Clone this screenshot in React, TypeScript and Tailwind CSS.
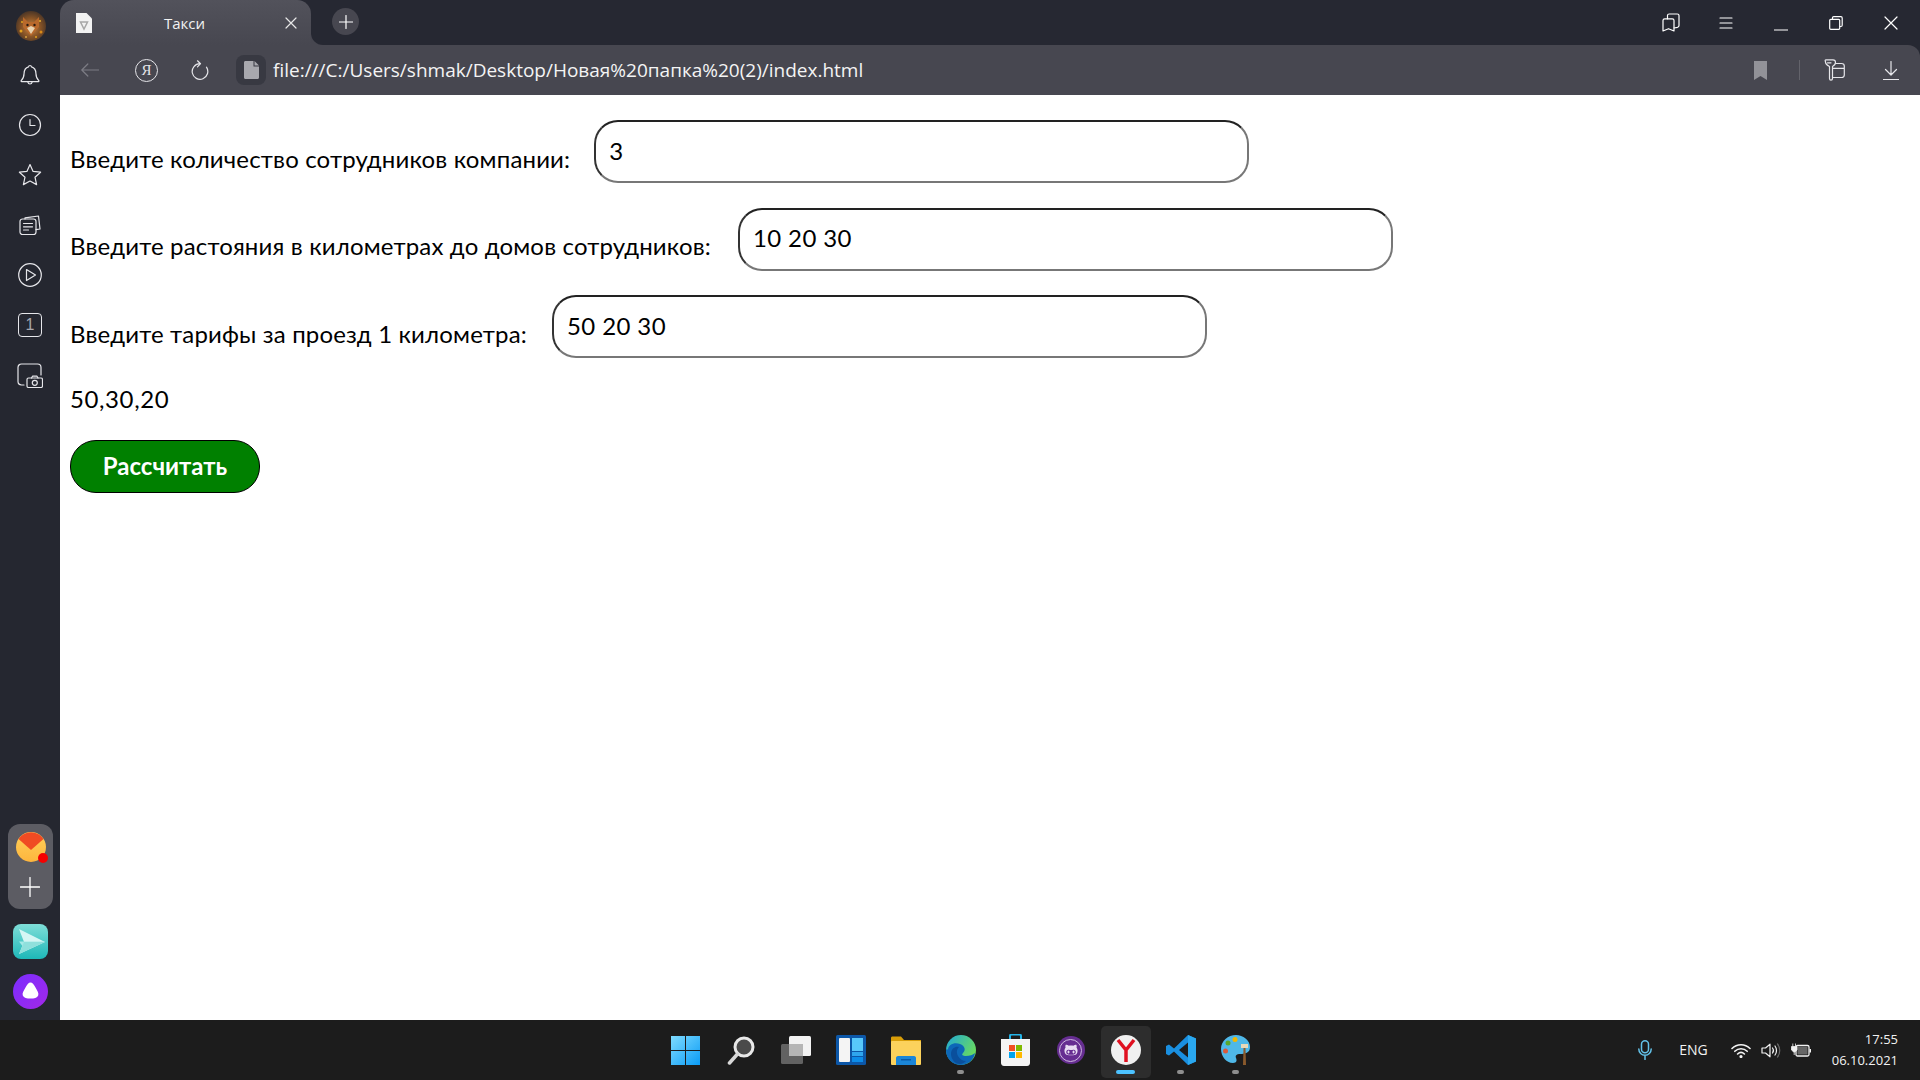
import React from "react";
import { FaGithubAlt } from "react-icons/fa";

const S = { fill: "none", stroke: "currentColor", strokeWidth: 1.2, strokeLinecap: "round" as const, strokeLinejoin: "round" as const };

function Ico({ w = 24, h = 24, children, className = "" }: { w?: number; h?: number; children: React.ReactNode; className?: string }) {
  return (
    <svg width={w} height={h} viewBox={`0 0 ${w} ${h}`} className={className} {...S}>
      {children}
    </svg>
  );
}

function SideItem({ children }: { children: React.ReactNode }) {
  return <div className="h-[50px] flex items-center justify-center text-[#e6e6ea]">{children}</div>;
}

function Sidebar() {
  return (
    <aside className="w-[60px] shrink-0 bg-[#252730] flex flex-col">
      <div className="h-[50px] flex items-start justify-center pt-[11px] pl-[2px]">
        <svg width="30" height="30" viewBox="0 0 30 30">
          <defs>
            <radialGradient id="fox" cx="50%" cy="55%" r="55%">
              <stop offset="0" stopColor="#c98a4a" />
              <stop offset="0.55" stopColor="#8a5526" />
              <stop offset="1" stopColor="#4a3526" />
            </radialGradient>
          </defs>
          <circle cx="15" cy="15" r="15" fill="url(#fox)" />
          <path d="M7 6l5 5h6l5-5 0 10-8 9-8-9z" fill="#b8692c" />
          <path d="M11 17l4 6 4-6-4-2z" fill="#e8d2b0" />
          <circle cx="11.500" cy="14" r="1.200" fill="#2a1a10" />
          <circle cx="18.500" cy="14" r="1.200" fill="#2a1a10" />
          <circle cx="5" cy="20" r="1.500" fill="#e2a11e" />
          <circle cx="25" cy="21" r="1.500" fill="#d98a18" />
          <circle cx="6" cy="11" r="1" fill="#e2a11e" />
          <circle cx="24" cy="10" r="1" fill="#e8b030" />
          <circle cx="10" cy="26" r="1" fill="#d9a040" />
          <circle cx="20" cy="26" r="1" fill="#e2a11e" />
        </svg>
      </div>
      <SideItem>
        <Ico>
          <path d="M12 2.500c.9 0 1.400.6 1.500 1.300 3 .8 4.300 3.400 4.400 6.400.1 3.800 1.100 5.700 2.900 7.500.3.400.1.900-.4.900H3.600c-.5 0-.7-.5-.4-.9 1.800-1.800 2.800-3.700 2.900-7.500.1-3 1.400-5.600 4.400-6.400.1-.7.600-1.300 1.500-1.300z" />
          <path d="M9.800 18.800c.3 1.500 1.100 2.200 2.200 2.200s1.900-.7 2.200-2.200" />
        </Ico>
      </SideItem>
      <SideItem>
        <Ico>
          <circle cx="12" cy="12" r="10.500" />
          <path d="M12 6.500V12.500H17" />
        </Ico>
      </SideItem>
      <SideItem>
        <Ico>
          <path d="M12 1.500l3.100 6.900 7.500.8-5.600 5 1.600 7.400L12 18l-6.600 3.600 1.600-7.400-5.600-5 7.500-.8z" />
        </Ico>
      </SideItem>
      <SideItem>
        <Ico>
          <rect x="2" y="6" width="16" height="15.500" rx="2.500" />
          <path d="M5.500 10.500h9M5.500 13.800h9M5.500 17h5" />
          <path d="M7 6V4.800l13.500-1.800 1.500 13-4 .6" />
        </Ico>
      </SideItem>
      <SideItem>
        <Ico>
          <circle cx="12" cy="12" r="11.300" />
          <path d="M8.500 6.500l9 5.500-9 5.500z" />
        </Ico>
      </SideItem>
      <SideItem>
        <div className="w-[24px] h-[24px] border-[1.3px] border-[#e6e6ea] rounded-[4px] flex items-center justify-center text-[16px] leading-none font-['Liberation_Sans',sans-serif] text-[#a8a8ae]">1</div>
      </SideItem>
      <SideItem>
        <Ico w={26} h={25}>
          <path d="M7 22H4.500C2.500 22 1 20.500 1 18.500V4.500C1 2.500 2.500 1 4.500 1H20.500C22.500 1 24 2.500 24 4.500V12" />
          <rect x="10" y="15" width="15.500" height="9.500" rx="1.500" />
          <circle cx="17.800" cy="19.800" r="2.500" />
          <path d="M14.500 15l1-1.800h4.500l1 1.800" />
        </Ico>
      </SideItem>

      <div className="mt-auto flex flex-col items-center pb-[11px]">
        <div className="w-[45px] h-[85px] bg-[#5c5c63] rounded-[12px] flex flex-col items-center">
          <svg width="32" height="32" viewBox="0 0 32 32" className="mt-[8px] ml-[3px] overflow-visible">
            <defs>
              <linearGradient id="mailB" x1="0" y1="0" x2="0" y2="1">
                <stop offset="0" stopColor="#ffd15a" />
                <stop offset="1" stopColor="#fdb53d" />
              </linearGradient>
            </defs>
            <circle cx="15" cy="15" r="15" fill="url(#mailB)" />
            <path d="M2.500 7A15 15 0 0 1 27.500 7L15 18z" fill="#f04b23" />
            <circle cx="27" cy="26" r="5" fill="#f40000" />
          </svg>
          <svg width="20" height="20" viewBox="0 0 20 20" className="mt-[13px] text-white" {...S} strokeWidth={1.3}>
            <path d="M10 .5V19.500M.5 10H19.500" />
          </svg>
        </div>
        <svg width="35" height="35" viewBox="0 0 35 35" className="mt-[15px]">
          <defs>
            <linearGradient id="tg" x1="0" y1="0" x2="0" y2="1">
              <stop offset="0" stopColor="#7fded8" />
              <stop offset="1" stopColor="#1eb8b8" />
            </linearGradient>
          </defs>
          <rect width="35" height="35" rx="8" fill="url(#tg)" />
          <path d="M6 5L32 18 6 30 11 18z" fill="#d6f6f4" />
          <path d="M6 17.500H32L11 24z" fill="#a5e9e6" />
          <path d="M11 18L6 30 32 18z" fill="#8fe0dc" />
        </svg>
        <svg width="35" height="35" viewBox="0 0 35 35" className="mt-[15px]">
          <defs>
            <linearGradient id="al" x1="0" y1="0" x2="1" y2="1">
              <stop offset="0" stopColor="#7a2dff" />
              <stop offset="1" stopColor="#a328e8" />
            </linearGradient>
          </defs>
          <circle cx="17.500" cy="17.500" r="17.500" fill="url(#al)" />
          <path d="M17.500 8.500c2 0 3 1.500 5 5 2 3.500 3.500 5.500 2.700 8-1 2.500-4 3-7.700 3s-6.700-.5-7.700-3c-.8-2.500.7-4.500 2.700-8s3-5 5-5z" fill="#fff" />
        </svg>
      </div>
    </aside>
  );
}

function WinSlot({ children }: { children: React.ReactNode }) {
  return <div className="w-[55px] h-[20px] flex items-center justify-center">{children}</div>;
}

function TabStrip() {
  return (
    <div className="h-[45px] shrink-0 bg-[#262832] flex items-stretch text-white">
      <div className="w-[251px] rounded-t-[14px] bg-gradient-to-b from-[#52525b] to-[#474750] flex items-center pl-[16px] pr-[14px]">
        <svg width="16" height="20" viewBox="0 0 16 20" className="shrink-0 mt-[1px]">
          <path d="M0 0H10.500L16 5.500V20H0z" fill="#f2f2f2" />
          <path d="M4.500 9L11.500 9 8 16z" fill="none" stroke="#a8a8a8" strokeWidth="1.500" />
        </svg>
        <span className="ml-[72px] mt-[1px] text-[15px] leading-none font-['Open_Sans',sans-serif] text-[#f2f2f2]">Такси</span>
        <svg width="12" height="12" viewBox="0 0 12 12" className="ml-auto text-[#e8e8e8]" {...S}>
          <path d="M1 1L11 11M11 1L1 11" />
        </svg>
      </div>
      <div className="flex-1 bg-[#474750]">
        <div className="h-full bg-[#262832] rounded-bl-[12px] flex items-start">
          <div className="ml-[21px] pt-[8px]">
            <div className="w-[27px] h-[27px] rounded-full bg-[#474750] flex items-center justify-center">
              <svg width="14" height="14" viewBox="0 0 14 14" {...S}>
                <path d="M7 .5V13.500M.5 7H13.500" />
              </svg>
            </div>
          </div>
          <div className="ml-auto flex items-center pt-[13px] pr-[1.500px] text-white">
            <WinSlot>
              <svg width="18" height="20" viewBox="0 0 18 20" {...S}>
                <path d="M1 18V7.500c0-1 .6-1.700 1.700-1.700h7.600c1.100 0 1.700.7 1.700 1.700V18l-5.500-2.300z" />
                <path d="M5.500 5.800V2.500C5.500 1.500 6.100 1 7.200 1h8.100C16.400 1 17 1.500 17 2.500v10c0 .8-.5 1.500-1.500 1.800l-3.500.7" />
              </svg>
            </WinSlot>
            <WinSlot>
              <svg width="14" height="12" viewBox="0 0 14 12" {...S}>
                <path d="M1 1H13M1 6H13M1 11H13" />
              </svg>
            </WinSlot>
            <WinSlot>
              <svg width="14" height="14" viewBox="0 0 14 14" {...S} className="mt-[10px]">
                <path d="M.5 9H13.500" />
              </svg>
            </WinSlot>
            <WinSlot>
              <svg width="14" height="14" viewBox="0 0 14 14" {...S}>
                <rect x=".7" y="3.300" width="10" height="10" rx="1" />
                <path d="M3.500 3V1.800C3.500 1 4 .7 4.700.7h7.200c.8 0 1.300.5 1.300 1.300v7.300c0 .7-.4 1.200-1.200 1.200H11" />
              </svg>
            </WinSlot>
            <WinSlot>
              <svg width="14" height="14" viewBox="0 0 14 14" {...S}>
                <path d="M1 1L13 13M13 1L1 13" />
              </svg>
            </WinSlot>
          </div>
        </div>
      </div>
    </div>
  );
}

function Toolbar() {
  return (
    <div className="h-[50px] shrink-0 bg-[#474750] rounded-tr-[12px] flex items-center text-white">
      <svg width="18" height="14" viewBox="0 0 18 14" className="ml-[21px] text-[#7c7c84]" {...S}>
        <path d="M17.500 7H.8M6.800 1L.8 7l6 6" />
      </svg>
      <div className="ml-[36px] w-[23px] h-[23px] rounded-full border-[1.3px] border-[#e6e6ea] flex items-center justify-center text-[15px] leading-none font-['Liberation_Serif',serif] text-[#e6e6ea]">Я</div>
      <svg width="18" height="20" viewBox="0 0 18 20" className="ml-[33px] text-[#e6e6ea]" {...S}>
        <path d="M9 3.700A7.800 7.800 0 1 0 15.500 7.200" />
        <path d="M6.500 .8L9.500 3.700 6.500 6.800" />
      </svg>
      <div className="ml-[27px] w-[30px] h-[30px] rounded-[8px] bg-[#383942] flex items-center justify-center">
        <svg width="15" height="18" viewBox="0 0 15 18">
          <path d="M1.500 0H9.500V5.500H15V16.500c0 .9-.6 1.500-1.500 1.500H1.500C.6 18 0 17.400 0 16.500V1.500C0 .6.600 0 1.500 0zM10.500 0L15 4.500H10.500z" fill="#a8a8ae" />
        </svg>
      </div>
      <span className="ml-[7px] mt-[1px] text-[19px] leading-none font-['Open_Sans',sans-serif] text-[#f4f4f4] whitespace-nowrap">
        file:///C:/Users/shmak/Desktop/Новая%20папка%20(2)/index.html
      </span>
      <div className="ml-auto flex items-center pr-[21px]">
        <svg width="13" height="19" viewBox="0 0 13 19" className="mr-[32px]">
          <path d="M0 0H13V19L6.500 15 0 19z" fill="#929298" />
        </svg>
        <div className="w-[1.500px] h-[20px] bg-[#63636b] mr-[23px]" />
        <svg width="22" height="22" viewBox="0 0 22 22" className="mr-[38px] text-[#e6e6ea]" {...S}>
          <path d="M3 .8h7c1.500 0 2.500 1 2.500 2.500s-.5 3-3 4.200v12c0 1-.5 1.700-1.500 1.700s-1.500-.7-1.500-1.700v-12c-2.500-1.200-4-2.700-4-4.200S1.500.8 3 .8z" />
          <path d="M4.500 3.800H8M12.500 4.500h6c1.500 0 2.800 1.200 2.800 2.500v9c0 1.500-1.300 2.500-2.800 2.500H10M9.500 9.300h11.800" />
        </svg>
        <svg width="16" height="19" viewBox="0 0 16 19" className="text-[#e6e6ea]" {...S}>
          <path d="M8 .5V14M2.500 8.500L8 14l5.500-5.500M.5 18.500H15.500" />
        </svg>
      </div>
    </div>
  );
}

function Field({ label, value, gap }: { label: string; value: string; gap: string }) {
  return (
    <div className="flex items-center h-[63px] mb-[24.500px]">
      <label className={`pt-[14px] ${gap} text-[24px] leading-[32px] tracking-[0.16px] text-black whitespace-nowrap`}>{label}</label>
      <input
        readOnly
        value={value}
        className="w-[655px] h-[63px] rounded-[24px] border-2 border-t-[#222] border-l-[#333] border-r-[#777] border-b-[#777] pl-[13px] pr-[13px] pb-[3px] text-[24px] tracking-[0.4px] text-black outline-none bg-white font-['Lato','Noto_Sans',sans-serif]"
      />
    </div>
  );
}

function Page() {
  return (
    <main className="flex-1 bg-white pt-[25px] pl-[10px] font-['Lato','Noto_Sans',sans-serif]">
      <Field label="Введите количество сотрудников компании:" value="3" gap="mr-[24px]" />
      <Field label="Введите растояния в километрах до домов сотрудников:" value="10 20 30" gap="mr-[27px]" />
      <Field label="Введите тарифы за проезд 1 километра:" value="50 20 30" gap="mr-[25px]" />
      <p className="text-[24px] leading-[32px] tracking-[0.6px] text-black">50,30,20</p>
      <button className="block mt-[25px] w-[190px] h-[53px] rounded-[26px] bg-[#008000] border border-black text-white text-[24px] font-bold">Рассчитать</button>
    </main>
  );
}

function TaskIcon({ children, active, dot }: { children: React.ReactNode; active?: boolean; dot?: boolean }) {
  return (
    <div className="relative w-[55px] h-[52px] flex items-center justify-center">
      {active && <div className="absolute left-[2.500px] top-0 w-[50px] h-[52px] rounded-[5px] bg-[#2d2d2d]" />}
      <div className="relative mb-[4px]">{children}</div>
      {dot && <div className="absolute bottom-[4px] left-[24px] w-[7px] h-[4px] rounded-full bg-[#8e8e8e]" />}
      {active && <div className="absolute bottom-[4px] left-[18px] w-[19px] h-[4px] rounded-full bg-[#4cc2ff]" />}
    </div>
  );
}

function Taskbar() {
  return (
    <footer className="h-[60px] shrink-0 bg-[#1c1c1c] grid grid-cols-[1fr_auto_1fr] items-center">
      <div />
      <div className="flex items-center h-[52px] mt-[4px] ml-[1px]">
        <TaskIcon>
          <svg width="29" height="29" viewBox="0 0 29 29">
            <defs>
              <linearGradient id="win" x1="0" y1="0" x2="1" y2="1">
                <stop offset="0" stopColor="#7fdcff" />
                <stop offset="1" stopColor="#0a9bf5" />
              </linearGradient>
            </defs>
            <path d="M0 0H14V14H0zM15 0H29V14H15zM0 15H14V29H0zM15 15H29V29H15z" fill="url(#win)" />
          </svg>
        </TaskIcon>
        <TaskIcon>
          <svg width="28" height="29" viewBox="0 0 28 29">
            <circle cx="17" cy="11" r="9" fill="#4a4a4a" stroke="#e8e8e8" strokeWidth="3" />
            <path d="M10.500 18L2.500 27" stroke="#d8d8d8" strokeWidth="3.500" strokeLinecap="round" />
          </svg>
        </TaskIcon>
        <TaskIcon>
          <svg width="30" height="28" viewBox="0 0 30 28">
            <rect x="8" y="0" width="22" height="20" rx="1.500" fill="#f2f2f2" />
            <rect x="0" y="8" width="22" height="20" rx="1.500" fill="#6a6a6a" fillOpacity="0.9" />
            <rect x="8" y="8" width="14" height="12" fill="#b5b5b5" />
          </svg>
        </TaskIcon>
        <TaskIcon>
          <svg width="30" height="30" viewBox="0 0 30 30">
            <rect width="30" height="30" rx="1.500" fill="#0c57a8" />
            <rect x="3" y="3" width="11" height="24" rx="1" fill="#f4f4f4" />
            <rect x="16" y="3" width="11" height="13" fill="#58c8fa" />
            <rect x="16" y="17" width="11" height="4" fill="#2fa6ee" />
            <rect x="16" y="22" width="11" height="5" fill="#0c8ce8" />
          </svg>
        </TaskIcon>
        <TaskIcon>
          <svg width="30" height="29" viewBox="0 0 30 29">
            <path d="M0 2C0 1 .6.500 1.500.500H10L13 4H30V10H0z" fill="#d99e08" />
            <rect y="5" width="30" height="24" rx="1" fill="#fcd25c" />
            <path d="M5 22c0-1 .6-2 2-2h16c1.400 0 2 1 2 2v7H5z" fill="#1b86d8" />
            <rect x="10" y="23" width="10" height="1.500" fill="#0a5aa8" />
          </svg>
        </TaskIcon>
        <TaskIcon dot>
          <svg width="30" height="30" viewBox="0 0 30 30">
            <defs>
              <linearGradient id="edge1" x1="0" y1="0" x2="1" y2="0.600">
                <stop offset="0" stopColor="#1fa8d8" />
                <stop offset="1" stopColor="#6cdc5a" />
              </linearGradient>
            </defs>
            <circle cx="15" cy="15" r="15" fill="url(#edge1)" />
            <path d="M2 15C2 9 9 7 14 9c5 2 6 6 3 9-2 2 0 3 3 3 3.500 0 7-1 9-3-1 7-7 12-14 12C7 30 0 24 0 15c0-1 2-1 2 0z" fill="#0d67b8" />
            <path d="M5 19c0-6 5-8 8-7-2 2-3 5-1 9 1.500 3 5 5 8 5-2 2-4 3-6 3-5 0-9-5-9-10z" fill="#0a4f9c" />
          </svg>
        </TaskIcon>
        <TaskIcon>
          <svg width="29" height="32" viewBox="0 0 29 32">
            <path d="M9 5V2c0-1 .6-1.500 1.500-1.500h8c.9 0 1.500.5 1.500 1.500v3" fill="none" stroke="#24b4e8" strokeWidth="2" />
            <path d="M0 5H29V29c0 1.500-1 3-3 3H3c-2 0-3-1.500-3-3z" fill="#f4f4f4" />
            <rect x="8" y="11" width="6" height="6" fill="#f25022" />
            <rect x="15" y="11" width="6" height="6" fill="#7fba00" />
            <rect x="8" y="18" width="6" height="6" fill="#00a4ef" />
            <rect x="15" y="18" width="6" height="6" fill="#ffb900" />
          </svg>
        </TaskIcon>
        <TaskIcon>
          <div className="w-[28px] h-[28px] rounded-full bg-[#662d91] flex items-center justify-center">
            <div className="w-[23px] h-[23px] rounded-full border-[1.5px] border-[#cdb8de] flex items-center justify-center overflow-hidden">
              <FaGithubAlt className="text-[#e8dcf2] text-[14px]" />
            </div>
          </div>
        </TaskIcon>
        <TaskIcon active>
          <svg width="30" height="30" viewBox="0 0 30 30">
            <circle cx="15" cy="15" r="15" fill="#f0f0f0" />
            <path d="M7 5L15 15 23 5M15 15V27" fill="none" stroke="#e01020" strokeWidth="3.500" />
          </svg>
        </TaskIcon>
        <TaskIcon dot>
          <svg width="30" height="30" viewBox="0 0 30 30">
            <path d="M22 0L30 3.500V26.500L22 30 8 16.500 3 20.500 0 19V11L3 9.500 8 13.500z" fill="#1a8fe0" />
            <path d="M22 7.500L13 15l9 7.500z" fill="#1c1c1c" />
            <path d="M22 0L30 3.500V26.500L22 30z" fill="#2aa8f0" />
          </svg>
        </TaskIcon>
        <TaskIcon dot>
          <svg width="29" height="32" viewBox="0 0 29 32">
            <path d="M15 1C7 1 0 7 0 15c0 7 5 14 12 14 4 0 4-3 3-5-1-3 1-4 4-4 5 0 10-1 10-7 0-7-7-12-14-12z" fill="#4fb8e8" />
            <circle cx="7" cy="9" r="2.500" fill="#5aa82c" />
            <circle cx="14" cy="5.500" r="2.500" fill="#f2b800" />
            <circle cx="4.500" cy="17" r="2.500" fill="#d85a3c" />
            <path d="M20 10h7v4h-7z" fill="#e8d8b8" />
            <path d="M22.500 14h2l.5 17h-3z" fill="#8a5a2c" />
          </svg>
        </TaskIcon>
      </div>
      <div className="flex items-center justify-end pr-[22px] text-[#f2f2f2] font-['Open_Sans',sans-serif]">
        <svg width="14" height="20" viewBox="0 0 14 20" className="text-[#63c1e8] mr-[27px]" {...S} strokeWidth={1.500}>
          <rect x="3.500" y=".8" width="7" height="12" rx="3.500" />
          <path d="M.8 9c0 3.500 2.800 6.300 6.200 6.300s6.200-2.800 6.200-6.300M7 15.500V19.500" />
        </svg>
        <span className="text-[14px] leading-none mr-[23px]">ENG</span>
        <svg width="20" height="15" viewBox="0 0 20 15" className="mr-[10px]" {...S} strokeWidth={1.600}>
          <path d="M1 5.500c5-5 13-5 18 0M3.800 8.300c3.500-3.500 8.900-3.500 12.400 0M6.600 11c2-2 4.800-2 6.800 0" />
          <circle cx="10" cy="13.500" r=".8" fill="currentColor" />
        </svg>
        <svg width="20" height="15" viewBox="0 0 20 15" className="mr-[10px]" {...S}>
          <path d="M1 5H4.500L9 1.200V13.800L4.500 10H1z" />
          <path d="M11.500 5c1.200 1.500 1.200 3.500 0 5M14 3c2 2.500 2 6.500 0 9" />
          <path d="M16.500 1c3 3.500 3 9.500 0 13" stroke="#666" />
        </svg>
        <svg width="20" height="15" viewBox="0 0 20 15" className="mr-[21px]">
          <rect x="5" y="2.500" width="13" height="10.500" rx="1.500" fill="none" stroke="#f2f2f2" strokeWidth="1.300" />
          <rect x="6.500" y="4" width="10" height="7.500" fill="#f2f2f2" fillOpacity="0.35" />
          <rect x="18.500" y="6" width="1.500" height="3.500" fill="#f2f2f2" />
          <path d="M.5 3.500H6V7L3.200 9.500.5 7zM1.800.5V3.500M4.500.5V3.500M3.200 9.500V12" fill="#f2f2f2" stroke="#f2f2f2" strokeWidth=".8" />
        </svg>
        <div className="flex flex-col items-end text-[13px] leading-[21px] -mt-[1px]">
          <span>17:55</span>
          <span>06.10.2021</span>
        </div>
      </div>
    </footer>
  );
}

export default function App() {
  return (
    <div className="w-[1920px] h-[1080px] overflow-hidden flex flex-col">
      <div className="flex-1 flex min-h-0">
        <Sidebar />
        <div className="flex-1 flex flex-col min-w-0 bg-[#262832]">
          <TabStrip />
          <Toolbar />
          <Page />
        </div>
      </div>
      <Taskbar />
    </div>
  );
}
